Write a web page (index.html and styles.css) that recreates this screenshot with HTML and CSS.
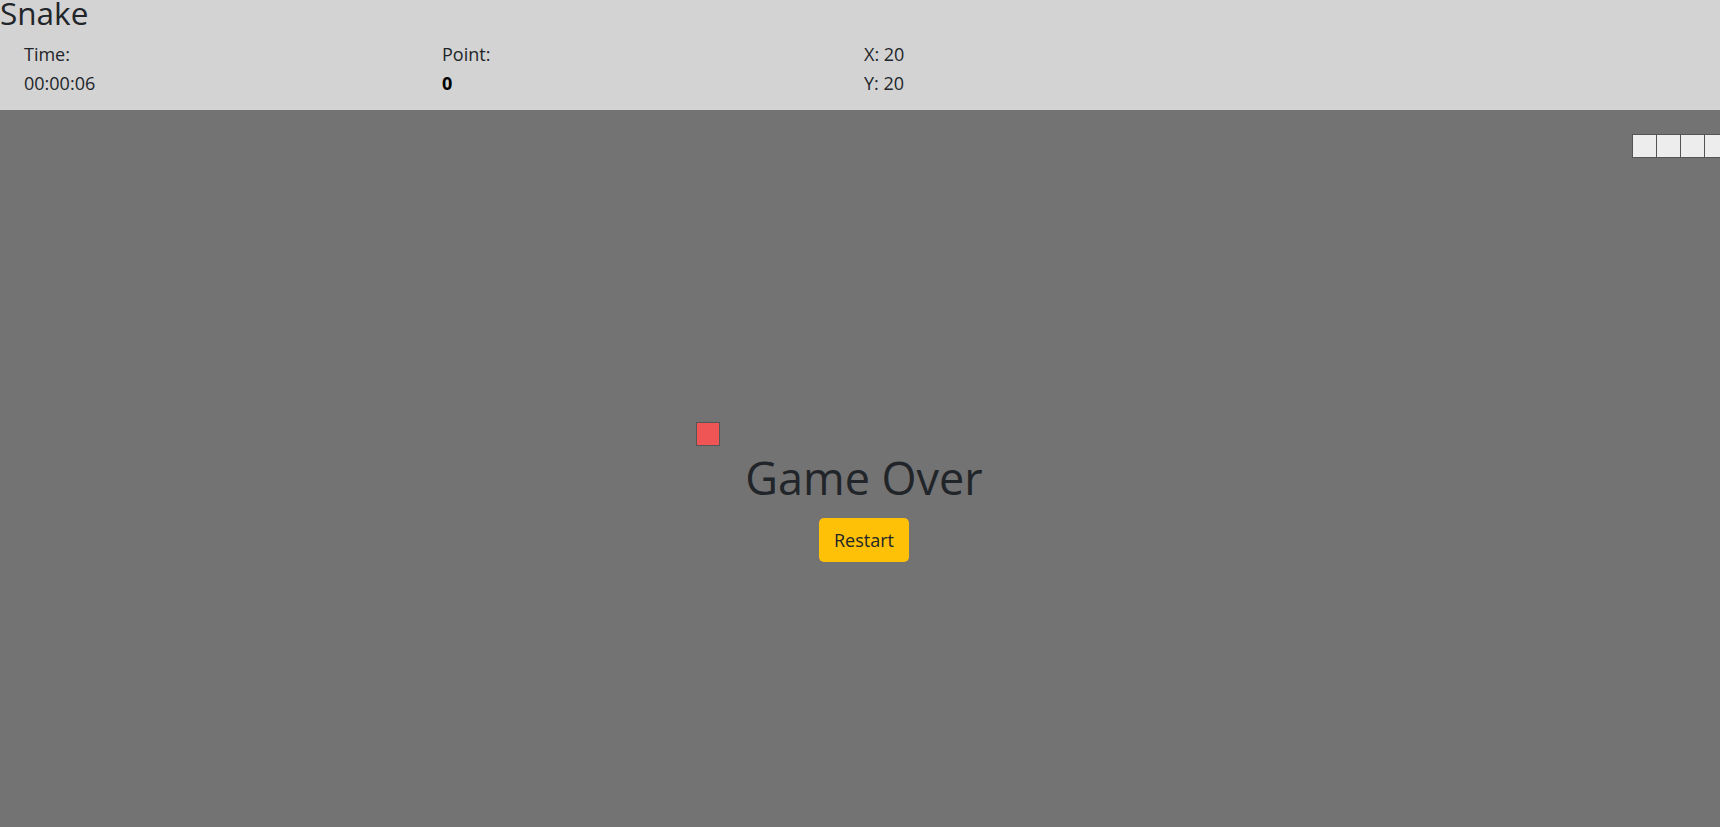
FILE: index.html
```html
<!DOCTYPE html>
<html lang="en">
<head>
<meta charset="utf-8">
<title>Snake</title>
<link rel="stylesheet" href="styles.css">
</head>
<body>
<header class="header">
  <h1 class="title">Snake</h1>
  <div class="stats">
    <div class="stat">
      <div>Time:</div>
      <div>00:00:06</div>
    </div>
    <div class="stat">
      <div>Point:</div>
      <div class="points">0</div>
    </div>
    <div class="stat">
      <div>X: 20</div>
      <div>Y: 20</div>
    </div>
  </div>
</header>
<main class="board">
  <div class="snake">
    <div class="cell"></div>
    <div class="cell"></div>
    <div class="cell"></div>
    <div class="cell cell-last"></div>
  </div>
  <div class="food"></div>
  <div class="over">
    <div class="over-title">Game Over</div>
    <button class="btn-restart" type="button">Restart</button>
  </div>
</main>
</body>
</html>
```

FILE: styles.css
```css
html, body {
  margin: 0;
  padding: 0;
  height: 100%;
  overflow: hidden;
}

body {
  font-family: "Open Sans", "Noto Sans", sans-serif;
  color: #212529;
  background: #737373;
  display: flex;
  flex-direction: column;
}

.header {
  background: #d3d3d3;
  height: 110px;
  flex: none;
}

.title {
  margin: 0;
  font-size: 31.5px;
  font-weight: 400;
  line-height: 24px;
  padding-top: 1px;
}

.stats {
  display: grid;
  grid-template-columns: 418px 422px 1fr;
  padding-left: 24px;
  margin-top: 15px;
  font-size: 18px;
  line-height: 29px;
}

.points {
  font-weight: 700;
  color: #000;
}

.board {
  position: relative;
  flex: 1;
  background: #737373;
  display: flex;
  flex-direction: column;
  align-items: center;
  padding-top: 341px;
  padding-left: 8px;
}

.snake {
  position: absolute;
  top: 24px;
  left: 1632px;
  display: flex;
}

.cell {
  box-sizing: border-box;
  width: 24px;
  height: 24px;
  background: #ededed;
  border: 1px solid #555;
  border-right: none;
}

.cell-last {
  border-right: 1px solid #555;
}

.food {
  position: absolute;
  top: 312px;
  left: 696px;
  box-sizing: border-box;
  width: 24px;
  height: 24px;
  background: #f05555;
  border: 1px solid #555;
}

.over {
  display: flex;
  flex-direction: column;
  align-items: center;
}

.over-title {
  font-size: 45px;
  line-height: 53px;
  color: #212529;
}

.btn-restart {
  margin-top: 14px;
  font-family: inherit;
  font-size: 18px;
  line-height: 26px;
  padding: 9px 15px;
  color: #212529;
  background: #ffc107;
  border: none;
  border-radius: 5px;
  cursor: pointer;
}
```
